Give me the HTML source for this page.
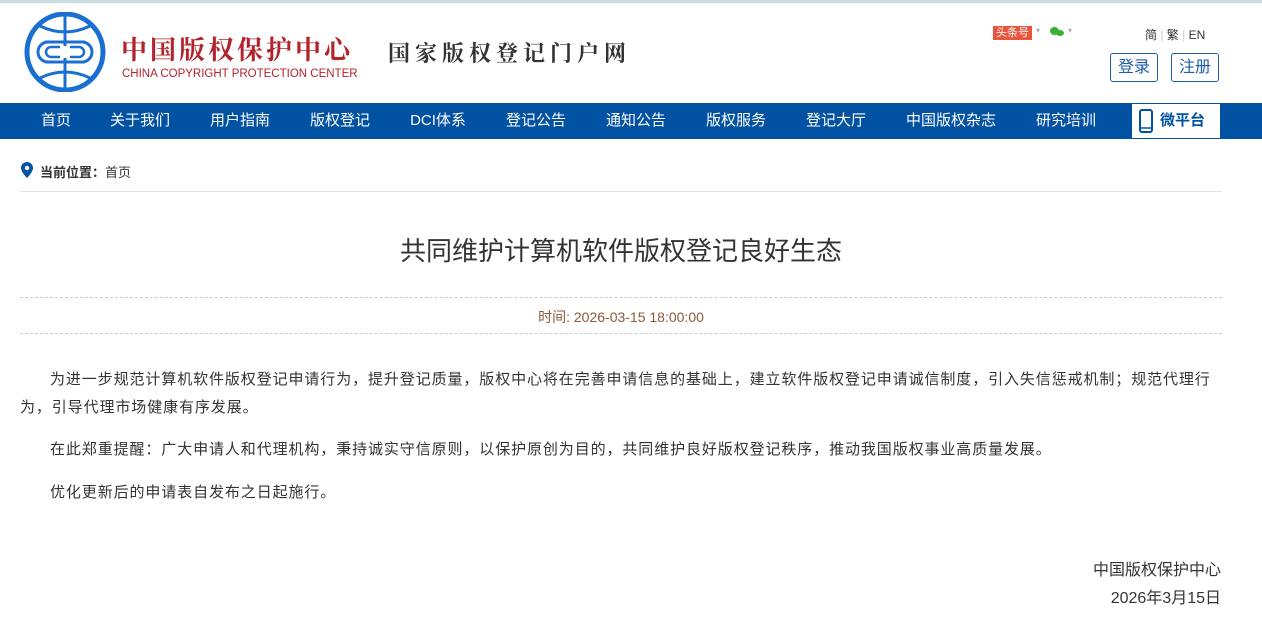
<!DOCTYPE html>
<html><head><meta charset="utf-8"><style>
body{margin:0;width:1262px;height:618px;overflow:hidden;background:#fff;font-family:"Liberation Sans","Noto Sans CJK SC",sans-serif;color:#333}
.top{height:3px;background:#c9dde3}
.abs{position:absolute}
.nav{position:absolute;top:103px;left:0;width:1262px;height:36px;background:#0252a3}
.nav span{position:absolute;top:0;line-height:36px;color:#fff;font-size:15px;transform:translateX(-50%);white-space:nowrap}
.btn{position:absolute;top:53px;height:29px;width:48px;border:1px solid #1a5ea8;border-radius:3px;color:#1a5ea8;font-size:16px;line-height:27px;text-align:center;box-sizing:border-box}
p{margin:0}
.body p{position:absolute;left:20px;width:1202px;font-size:15px;line-height:28px;text-indent:30px;color:#333;letter-spacing:0.9px}
</style></head><body>
<div class="top"></div>
<svg class="abs" style="left:20px;top:12px" width="90" height="80" viewBox="0 0 90 80">
<circle cx="45" cy="40" r="38" fill="none" stroke="#1a6fd1" stroke-width="5"/>
<path d="M45 2V78M20 14Q45 26 70 14M20 66Q45 54 70 66M25 30H65M25 50H65" fill="none" stroke="#1a6fd1" stroke-width="3"/>
<path d="M40 30H28a10 10 0 0 0 0 20H40M50 30H62a10 10 0 0 1 0 20H50" fill="none" stroke="#1a6fd1" stroke-width="3"/>
<rect x="30" y="34" width="30" height="12" fill="#fff"/>
<path d="M40 35H31a5 5 0 0 0 0 10H40M50 35H59a5 5 0 0 1 0 10H50" fill="none" stroke="#1a6fd1" stroke-width="2.5"/>
</svg>
<div class="abs" style="left:121px;top:30px;font-size:26px;color:#b3232a;font-family:'Noto Serif CJK SC',serif;letter-spacing:3px;font-weight:bold">中国版权保护中心</div>
<div class="abs" style="left:122px;top:68px;font-size:11.5px;color:#b3232a">CHINA COPYRIGHT PROTECTION CENTER</div>
<div class="abs" style="left:388px;top:37px;font-size:22px;color:#333;letter-spacing:5px;font-family:'Noto Serif CJK SC',serif;font-weight:bold">国家版权登记门户网</div>
<div class="abs" style="left:993px;top:26px;background:#e9553c;color:#fff;font-size:11px;line-height:14px;padding:0 3px">头条号</div>
<div class="abs" style="left:1036px;top:26px;font-size:8px;color:#aaa">▾</div>
<div class="abs" style="left:1050px;top:27px;width:9px;height:8px;border-radius:50%;background:#3cb034"></div>
<div class="abs" style="left:1056px;top:30px;width:8px;height:6px;border-radius:50%;background:#3cb034"></div>
<div class="abs" style="left:1068px;top:26px;font-size:8px;color:#aaa">▾</div>
<div class="abs" style="left:1145px;top:26px;font-size:12px;color:#333">简 <span style="color:#ccc">|</span> 繁 <span style="color:#ccc">|</span> EN</div>
<div class="btn" style="left:1110px">登录</div>
<div class="btn" style="left:1171px">注册</div>
<div class="nav">
<span style="left:56px">首页</span><span style="left:140px">关于我们</span><span style="left:240px">用户指南</span><span style="left:340px">版权登记</span><span style="left:438px">DCI体系</span><span style="left:536px">登记公告</span><span style="left:636px">通知公告</span><span style="left:736px">版权服务</span><span style="left:836px">登记大厅</span><span style="left:951px">中国版权杂志</span><span style="left:1066px">研究培训</span>
<div style="position:absolute;left:1132px;top:1px;width:88px;height:34px;background:#fff">
<svg style="position:absolute;left:7px;top:5px" width="14" height="24" viewBox="0 0 14 24"><rect x="1" y="1" width="12" height="22" rx="2" fill="none" stroke="#0252a3" stroke-width="2"/><line x1="1" y1="19" x2="13" y2="19" stroke="#0252a3" stroke-width="1.5"/></svg>
<div style="position:absolute;left:28px;top:0;line-height:34px;font-size:15px;color:#0252a3;font-weight:bold">微平台</div></div>
</div>
<svg class="abs" style="left:21px;top:162px" width="12" height="16" viewBox="0 0 12 16"><path d="M6 0a6 6 0 0 1 6 6c0 4-6 10-6 10S0 10 0 6a6 6 0 0 1 6-6z" fill="#0252a3"/><circle cx="6" cy="6" r="2.2" fill="#fff"/></svg>
<div class="abs" style="left:40px;top:162px;font-size:13px;color:#333"><b>当前位置：</b>首页</div>
<div class="abs" style="left:20px;top:191px;width:1202px;border-top:1px solid #e2e2e2"></div>
<div class="abs" style="left:0;width:1242px;top:231px;text-align:center;font-size:26px;color:#333">共同维护计算机软件版权登记良好生态</div>
<div class="abs" style="left:20px;top:297px;width:1202px;border-top:1px dashed #ccc"></div>
<div class="abs" style="left:0;width:1242px;top:307px;text-align:center;font-size:14px;color:#8b5a3c">时间: 2026-03-15 18:00:00</div>
<div class="abs" style="left:20px;top:333px;width:1202px;border-top:1px dashed #ccc"></div>
<div class="body">
<p style="top:366px">为进一步规范计算机软件版权登记申请行为，提升登记质量，版权中心将在完善申请信息的基础上，建立软件版权登记申请诚信制度，引入失信惩戒机制；规范代理行为，引导代理市场健康有序发展。</p>
<p style="top:436px">在此郑重提醒：广大申请人和代理机构，秉持诚实守信原则，以保护原创为目的，共同维护良好版权登记秩序，推动我国版权事业高质量发展。</p>
<p style="top:479px">优化更新后的申请表自发布之日起施行。</p>
</div>
<div class="abs" style="right:41px;top:557px;font-size:16px;line-height:28px;text-align:right">中国版权保护中心<br>2026年3月15日</div>
</body></html>
